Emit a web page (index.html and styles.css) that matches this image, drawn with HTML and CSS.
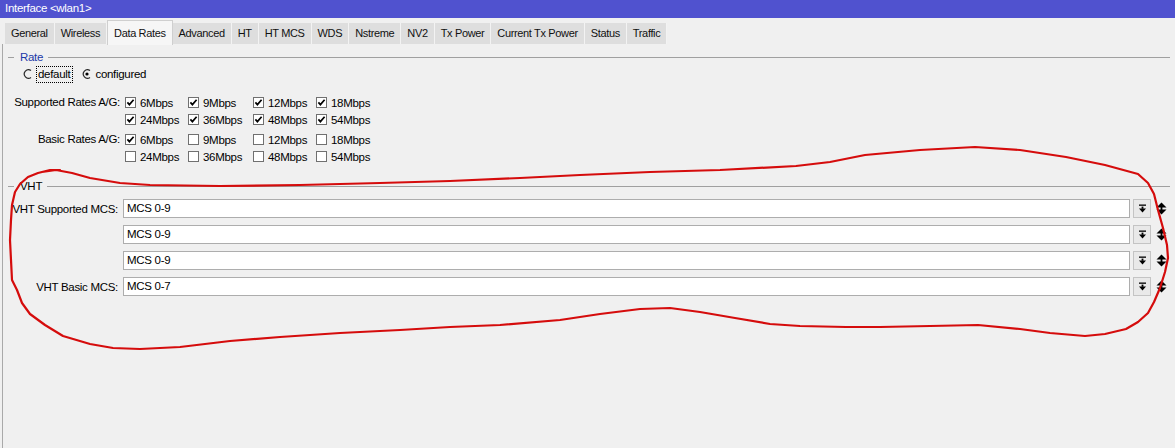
FILE: index.html
```html
<!DOCTYPE html>
<html>
<head>
<meta charset="utf-8">
<title>Interface &lt;wlan1&gt;</title>
<link rel="stylesheet" href="styles.css">
</head>
<body>
<div class="window">
  <div class="titlebar">Interface &lt;wlan1&gt;</div>
  <div class="tabs">
    <div class="tab">General</div>
    <div class="tab">Wireless</div>
    <div class="tab active">Data Rates</div>
    <div class="tab">Advanced</div>
    <div class="tab">HT</div>
    <div class="tab">HT MCS</div>
    <div class="tab">WDS</div>
    <div class="tab">Nstreme</div>
    <div class="tab">NV2</div>
    <div class="tab">Tx Power</div>
    <div class="tab">Current Tx Power</div>
    <div class="tab">Status</div>
    <div class="tab">Traffic</div>
  </div>
  <div class="panel">
    <div class="legend legend-rate"><span class="lead"></span><span class="legend-text blue">Rate</span><span class="rule"></span></div>
    <div class="radios">
      <div class="radio">
        <svg class="radio-ico" viewBox="0 0 10 10"><path d="M8 1.6 A4.2 4.2 0 1 0 8 8.4" fill="none" stroke="#2a2a2a" stroke-width="1.2"/></svg>
        <span class="focus">default</span>
      </div>
      <div class="radio">
        <svg class="radio-ico" viewBox="0 0 10 10"><path d="M8 1.6 A4.2 4.2 0 1 0 8 8.4" fill="none" stroke="#2a2a2a" stroke-width="1.2"/><circle cx="5" cy="5" r="1.6" fill="#000"/></svg>
        <span>configured</span>
      </div>
    </div>

    <div class="rates">
      <div class="rlabel">Supported Rates A/G:</div>
      <div class="cell"><svg class="cb" viewBox="0 0 11 11"><rect x=".5" y=".5" width="10" height="10" fill="#fff" stroke="#707070"/><path d="M2.4 5.4 L4.4 7.6 L8.6 2.8" fill="none" stroke="#000" stroke-width="1.7"/></svg>6Mbps</div>
      <div class="cell"><svg class="cb" viewBox="0 0 11 11"><rect x=".5" y=".5" width="10" height="10" fill="#fff" stroke="#707070"/><path d="M2.4 5.4 L4.4 7.6 L8.6 2.8" fill="none" stroke="#000" stroke-width="1.7"/></svg>9Mbps</div>
      <div class="cell"><svg class="cb" viewBox="0 0 11 11"><rect x=".5" y=".5" width="10" height="10" fill="#fff" stroke="#707070"/><path d="M2.4 5.4 L4.4 7.6 L8.6 2.8" fill="none" stroke="#000" stroke-width="1.7"/></svg>12Mbps</div>
      <div class="cell"><svg class="cb" viewBox="0 0 11 11"><rect x=".5" y=".5" width="10" height="10" fill="#fff" stroke="#707070"/><path d="M2.4 5.4 L4.4 7.6 L8.6 2.8" fill="none" stroke="#000" stroke-width="1.7"/></svg>18Mbps</div>

      <div class="rlabel"></div>
      <div class="cell"><svg class="cb" viewBox="0 0 11 11"><rect x=".5" y=".5" width="10" height="10" fill="#fff" stroke="#707070"/><path d="M2.4 5.4 L4.4 7.6 L8.6 2.8" fill="none" stroke="#000" stroke-width="1.7"/></svg>24Mbps</div>
      <div class="cell"><svg class="cb" viewBox="0 0 11 11"><rect x=".5" y=".5" width="10" height="10" fill="#fff" stroke="#707070"/><path d="M2.4 5.4 L4.4 7.6 L8.6 2.8" fill="none" stroke="#000" stroke-width="1.7"/></svg>36Mbps</div>
      <div class="cell"><svg class="cb" viewBox="0 0 11 11"><rect x=".5" y=".5" width="10" height="10" fill="#fff" stroke="#707070"/><path d="M2.4 5.4 L4.4 7.6 L8.6 2.8" fill="none" stroke="#000" stroke-width="1.7"/></svg>48Mbps</div>
      <div class="cell"><svg class="cb" viewBox="0 0 11 11"><rect x=".5" y=".5" width="10" height="10" fill="#fff" stroke="#707070"/><path d="M2.4 5.4 L4.4 7.6 L8.6 2.8" fill="none" stroke="#000" stroke-width="1.7"/></svg>54Mbps</div>

      <div class="rlabel low">Basic Rates A/G:</div>
      <div class="cell low"><svg class="cb" viewBox="0 0 11 11"><rect x=".5" y=".5" width="10" height="10" fill="#fff" stroke="#707070"/><path d="M2.4 5.4 L4.4 7.6 L8.6 2.8" fill="none" stroke="#000" stroke-width="1.7"/></svg>6Mbps</div>
      <div class="cell low"><svg class="cb" viewBox="0 0 11 11"><rect x=".5" y=".5" width="10" height="10" fill="#fff" stroke="#707070"/></svg>9Mbps</div>
      <div class="cell low"><svg class="cb" viewBox="0 0 11 11"><rect x=".5" y=".5" width="10" height="10" fill="#fff" stroke="#707070"/></svg>12Mbps</div>
      <div class="cell low"><svg class="cb" viewBox="0 0 11 11"><rect x=".5" y=".5" width="10" height="10" fill="#fff" stroke="#707070"/></svg>18Mbps</div>

      <div class="rlabel"></div>
      <div class="cell"><svg class="cb" viewBox="0 0 11 11"><rect x=".5" y=".5" width="10" height="10" fill="#fff" stroke="#707070"/></svg>24Mbps</div>
      <div class="cell"><svg class="cb" viewBox="0 0 11 11"><rect x=".5" y=".5" width="10" height="10" fill="#fff" stroke="#707070"/></svg>36Mbps</div>
      <div class="cell"><svg class="cb" viewBox="0 0 11 11"><rect x=".5" y=".5" width="10" height="10" fill="#fff" stroke="#707070"/></svg>48Mbps</div>
      <div class="cell"><svg class="cb" viewBox="0 0 11 11"><rect x=".5" y=".5" width="10" height="10" fill="#fff" stroke="#707070"/></svg>54Mbps</div>
    </div>

    <div class="legend legend-vht"><span class="lead"></span><span class="legend-text">VHT</span><span class="rule"></span></div>
    <div class="mcs">
      <div class="mrow">
        <div class="mlabel">VHT Supported MCS:</div>
        <div class="field">MCS 0-9</div>
        <div class="dd"><svg viewBox="0 0 9 9"><rect x="1" y="0.5" width="7" height="1.3" fill="#000"/><rect x="3.6" y="2.6" width="1.8" height="2.2" fill="#000"/><polygon points="1,4.6 8,4.6 4.5,8.4" fill="#000"/></svg></div>
        <svg class="ud" viewBox="0 0 11 13"><polygon points="0.5,5.5 5.5,0.5 10.5,5.5" fill="#000"/><rect x="4.6" y="5" width="1.8" height="3" fill="#000"/><polygon points="0.5,7.5 10.5,7.5 5.5,12.5" fill="#000"/></svg>
      </div>
      <div class="mrow">
        <div class="mlabel"></div>
        <div class="field">MCS 0-9</div>
        <div class="dd"><svg viewBox="0 0 9 9"><rect x="1" y="0.5" width="7" height="1.3" fill="#000"/><rect x="3.6" y="2.6" width="1.8" height="2.2" fill="#000"/><polygon points="1,4.6 8,4.6 4.5,8.4" fill="#000"/></svg></div>
        <svg class="ud" viewBox="0 0 11 13"><polygon points="0.5,5.5 5.5,0.5 10.5,5.5" fill="#000"/><rect x="4.6" y="5" width="1.8" height="3" fill="#000"/><polygon points="0.5,7.5 10.5,7.5 5.5,12.5" fill="#000"/></svg>
      </div>
      <div class="mrow">
        <div class="mlabel"></div>
        <div class="field">MCS 0-9</div>
        <div class="dd"><svg viewBox="0 0 9 9"><rect x="1" y="0.5" width="7" height="1.3" fill="#000"/><rect x="3.6" y="2.6" width="1.8" height="2.2" fill="#000"/><polygon points="1,4.6 8,4.6 4.5,8.4" fill="#000"/></svg></div>
        <svg class="ud" viewBox="0 0 11 13"><polygon points="0.5,5.5 5.5,0.5 10.5,5.5" fill="#000"/><rect x="4.6" y="5" width="1.8" height="3" fill="#000"/><polygon points="0.5,7.5 10.5,7.5 5.5,12.5" fill="#000"/></svg>
      </div>
      <div class="mrow">
        <div class="mlabel">VHT Basic MCS:</div>
        <div class="field">MCS 0-7</div>
        <div class="dd"><svg viewBox="0 0 9 9"><rect x="1" y="0.5" width="7" height="1.3" fill="#000"/><rect x="3.6" y="2.6" width="1.8" height="2.2" fill="#000"/><polygon points="1,4.6 8,4.6 4.5,8.4" fill="#000"/></svg></div>
        <svg class="ud" viewBox="0 0 11 13"><polygon points="0.5,5.5 5.5,0.5 10.5,5.5" fill="#000"/><rect x="4.6" y="5" width="1.8" height="3" fill="#000"/><polygon points="0.5,7.5 10.5,7.5 5.5,12.5" fill="#000"/></svg>
      </div>
    </div>
  </div>

  <svg class="annotation" viewBox="0 0 1175 448">
    <polyline fill="none" stroke="#d50c0c" stroke-width="2.2" stroke-linejoin="round" stroke-linecap="round"
      points="42,172 56,170 72,173 90,178 120,183 150,185 220,186 300,185 380,183 450,181 520,178 580,175 650,172 720,170 796,166 830,162 865,155 920,150 975,147 1020,150 1066,157 1105,165 1138,174 1148,183 1154,194 1158,210 1163,228 1167,245 1168,258 1165,272 1160,288 1154,302 1148,313 1138,322 1126,329 1105,334 1085,336 1050,333 1020,329 978,325 930,326 880,327 846,327 800,326 770,324 735,318 700,312 670,308 640,309 600,314 560,320 500,325 450,327 400,330 340,333 280,337 230,341 180,347 140,349 113,348 90,344 63,336 45,325 30,314 22,303 17,290 12,280 11,260 10,240 11,220 12,205 15,192 20,184 28,177 38,173 50,170 60,170"/>
  </svg>
</div>
</body>
</html>
```
FILE: styles.css
```css
html, body {
  margin: 0;
  padding: 0;
  background: #f0f0f0;
}

body {
  font-family: "Liberation Sans", Arial, sans-serif;
  font-size: 11.5px;
  letter-spacing: -0.3px;
  color: #000;
}

.window {
  position: relative;
  width: 1175px;
  height: 448px;
  overflow: hidden;
  display: flex;
  flex-direction: column;
}

.titlebar {
  height: 18px;
  line-height: 17px;
  background: #5052cf;
  color: #fff;
  padding-left: 5px;
  font-size: 11.5px;
}

.tabs {
  display: flex;
  align-items: flex-end;
  margin-top: 2px;
  padding-left: 5px;
  height: 24px;
  position: relative;
  z-index: 2;
  font-size: 11px;
  letter-spacing: -0.35px;
}

.tab {
  height: 21px;
  line-height: 20px;
  padding: 0 6px;
  background: #dedede;
  border-right: 1px solid #f3f3f3;
  box-sizing: border-box;
  color: #111;
}

.tab.active {
  line-height: 24px;
  background: #f6f6f6;
  border: 1px solid #cfcfcf;
  border-bottom: none;
  margin-bottom: -1px;
  height: 25px;
}

.panel {
  flex: 1;
  margin-left: 2px;
  border-left: 1px solid #a9a9a9;
  padding: 0 5px 0 5px;
  background: #f0f0f0;
}

.legend {
  display: flex;
  align-items: center;
  height: 14px;
}

.legend-rate { margin-top: 6px; }
.legend-vht { margin-top: 14px; }

.lead {
  width: 6px;
  border-top: 1px solid #a0a0a0;
}

.legend-text {
  padding: 0 5px 0 6px;
  font-size: 11.5px;
}

.legend-text.blue { color: #1c38a8; }

.rule {
  flex: 1;
  border-top: 1px solid #a0a0a0;
}

.radios {
  display: flex;
  align-items: center;
  height: 16px;
  margin-top: 2px;
  padding-left: 15px;
  gap: 9px;
}

.radio {
  display: flex;
  align-items: center;
  gap: 3px;
}

.radio-ico {
  width: 10px;
  height: 10px;
}

.focus {
  border: 1px dotted #000;
  padding: 0 2px 1px 1px;
  line-height: 14px;
}

.rates {
  display: grid;
  grid-template-columns: 117px 63px 65px 63px auto;
  grid-template-rows: 17px 17px 20px 17px;
  margin-top: 12px;
}

.rlabel {
  text-align: right;
  padding-right: 5px;
  line-height: 17px;
}

.cell {
  display: flex;
  align-items: center;
  gap: 4px;
}

.low {
  align-self: end;
  height: 17px;
}

.cb {
  width: 11px;
  height: 11px;
  flex: none;
}

.mcs {
  display: flex;
  flex-direction: column;
  gap: 7px;
  margin-top: 6px;
  padding-right: 3px;
}

.mrow {
  display: flex;
  align-items: center;
  height: 19px;
}

.mlabel {
  width: 115px;
  flex: none;
  text-align: right;
  padding-right: 5px;
  box-sizing: border-box;
}

.field {
  flex: 1;
  height: 19px;
  box-sizing: border-box;
  border: 1px solid #adadad;
  background: #fff;
  line-height: 17px;
  padding-left: 3px;
}

.dd {
  width: 18px;
  height: 19px;
  box-sizing: border-box;
  margin-left: 3px;
  border: 1px solid #c4c4c4;
  background: #e9e9e9;
  display: flex;
  align-items: center;
  justify-content: center;
}

.dd svg {
  width: 9px;
  height: 9px;
}

.ud {
  width: 11px;
  height: 13px;
  margin-left: 5px;
  flex: none;
}

.annotation {
  position: absolute;
  left: 0;
  top: 0;
  width: 1175px;
  height: 448px;
  pointer-events: none;
  z-index: 5;
}
```
